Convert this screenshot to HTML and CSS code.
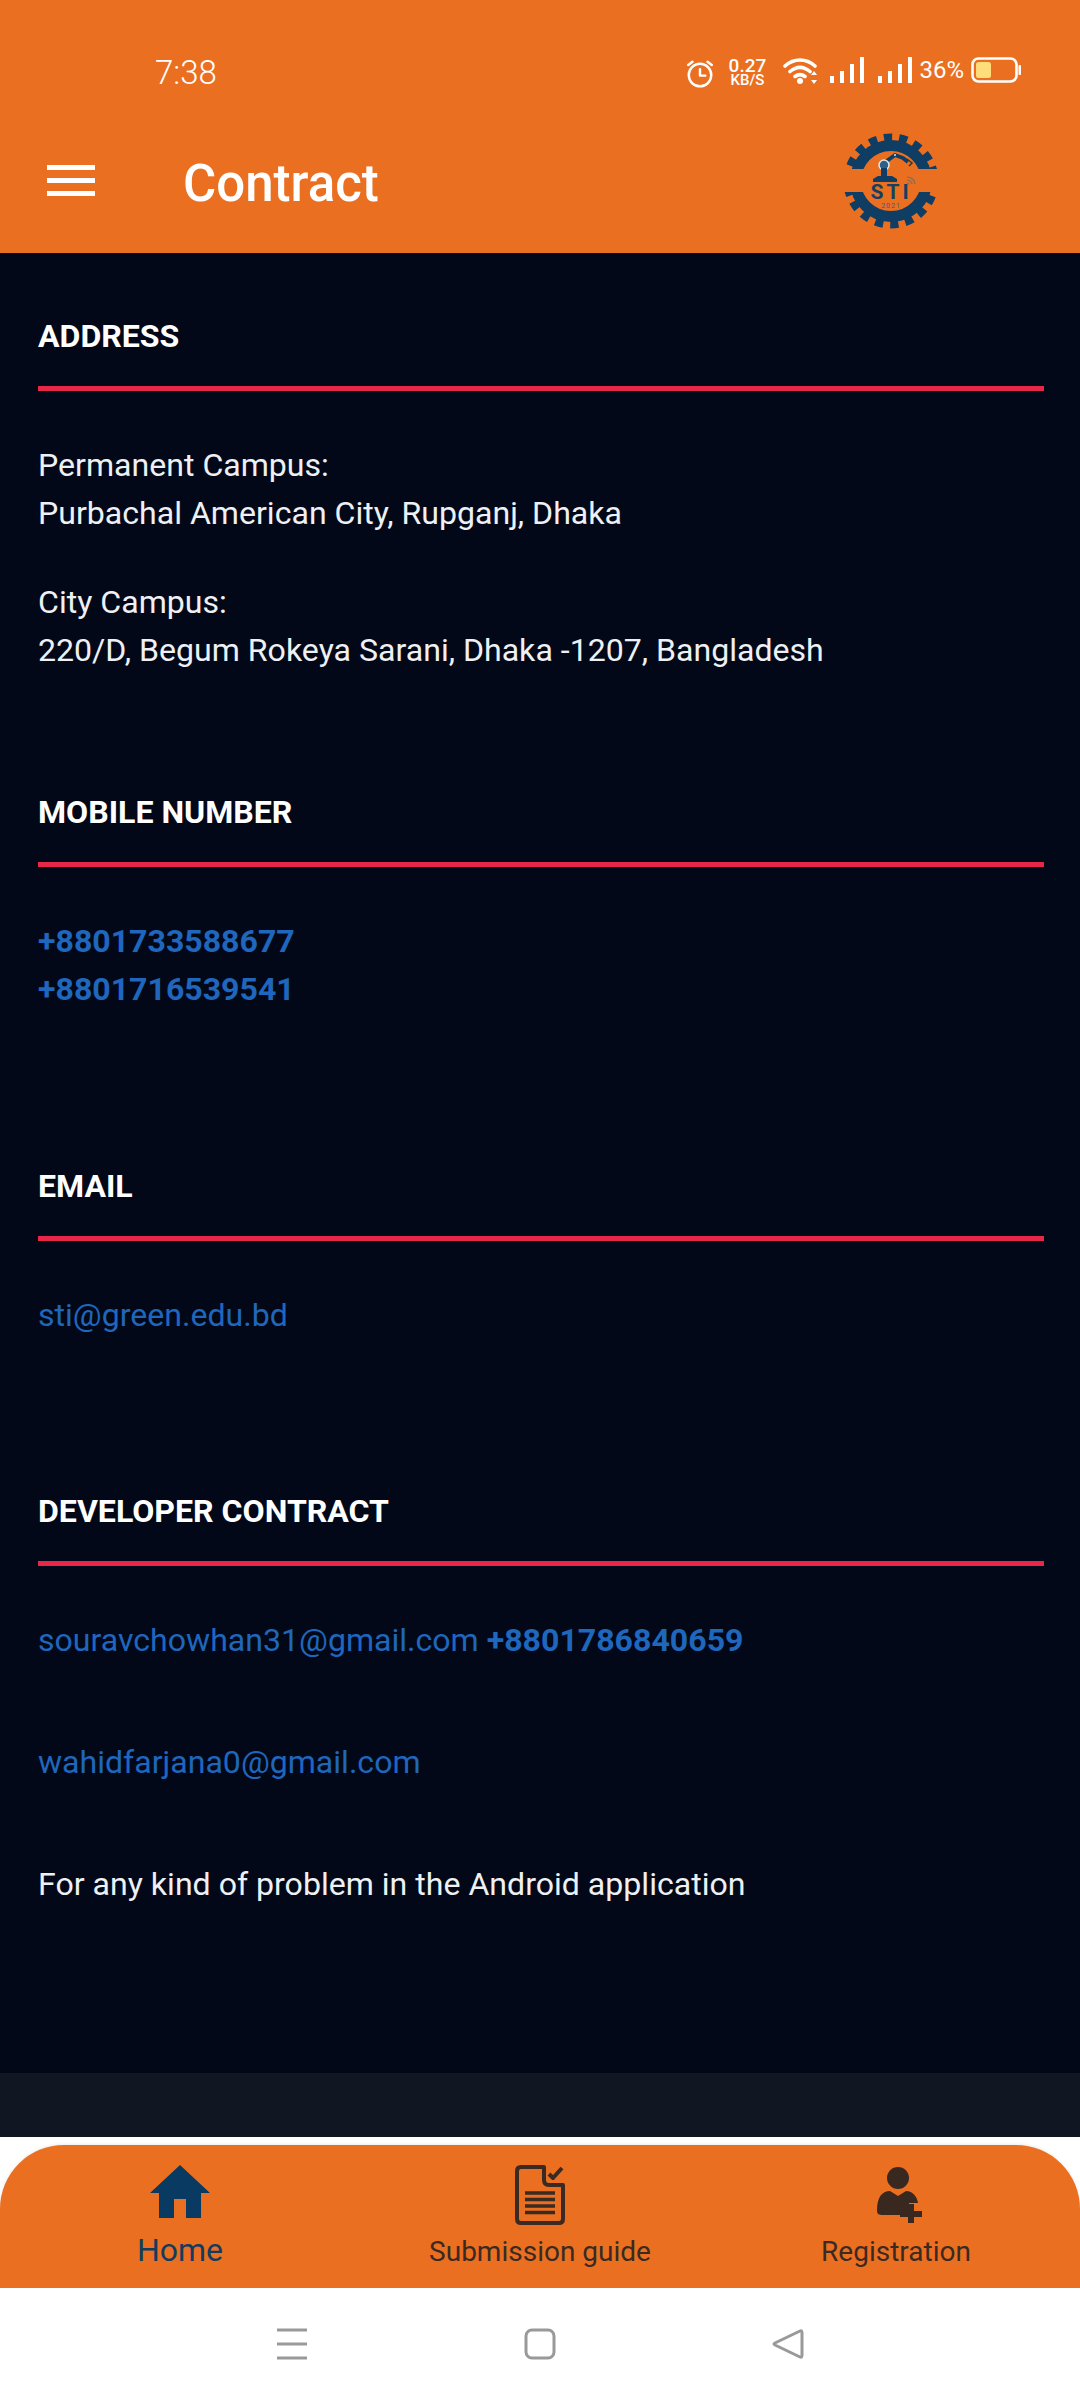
FILE: index.html
```html
<!DOCTYPE html>
<html lang="en">
<head>
<meta charset="utf-8">
<title>Contract</title>
<link rel="stylesheet" href="styles.css">
</head>
<body>
<div class="screen">
  <header class="top">
    <div class="status">
      <span class="time">7:38</span>
      <div class="status-icons">
        <svg class="ic-alarm" viewBox="0 0 28 28"><circle cx="14" cy="15" r="10.500"/><path d="M14 9.500V15.500H19M3 5.500L7 2.500M25 5.500L21 2.500"/></svg>
        <div class="speed"><span class="speed-num">0.27</span><span class="speed-unit">KB/S</span></div>
        <svg class="ic-wifi" viewBox="0 0 36 28"><path class="arc" d="M2 9C11 1 23 1 32 9M7 14.500C13.500 9 20.500 9 27 14.500M12 19.500C15.500 16.800 18.500 16.800 22 19.500"/><circle class="fill" cx="17" cy="24" r="3"/><path class="fill" d="M31 14L34 18H28ZM31 27L28 23H34Z"/></svg>
        <svg class="ic-signal" viewBox="0 0 34 26"><rect x="0" y="19" width="4" height="7"/><rect x="10" y="14" width="4" height="12"/><rect x="20" y="7" width="4" height="19"/><rect x="30" y="0" width="4" height="26"/></svg>
        <svg class="ic-signal ic-signal-b" viewBox="0 0 34 26"><rect x="0" y="19" width="4" height="7"/><rect x="10" y="14" width="4" height="12"/><rect x="20" y="7" width="4" height="19"/><rect x="30" y="0" width="4" height="26"/></svg>
        <span class="pct">36%</span>
        <svg class="ic-batt" viewBox="0 0 50 26"><rect class="batt-body" x="1.500" y="1.500" width="44" height="23" rx="6"/><rect class="batt-level" x="5" y="5" width="15" height="16" rx="2.500"/><rect class="batt-tip" x="47.500" y="8" width="2.500" height="10" rx="1"/></svg>
      </div>
    </div>
    <div class="appbar">
      <div class="burger"><i></i><i></i><i></i></div>
      <h1 class="title">Contract</h1>
      <svg class="logo" viewBox="0 0 94 98">
        <defs>
          <clipPath id="gearclip"><rect x="0" y="0" width="94" height="36"/><rect x="0" y="59" width="94" height="39"/></clipPath>
        </defs>
        <g clip-path="url(#gearclip)">
          <circle class="gear-teeth" cx="47" cy="48" r="43.500"/>
          <circle class="gear-ring" cx="47" cy="48" r="35.500"/>
        </g>
        <path class="arm" d="M40 30L51 22L59 25L64 29"/>
        <circle class="joint" cx="40" cy="32" r="5"/>
        <circle class="dot" cx="51" cy="22" r="1"/>
        <path class="base" d="M29 49V46L34 43H48L53 46V49ZM37 43L37 35H43L43 43Z"/>
        <path class="claw" d="M63 26L68 30L65 33"/>
        <text class="logo-sti" x="47" y="66" text-anchor="middle">STI</text>
        <text class="logo-year" x="47" y="75" text-anchor="middle">2021</text>
        <path class="wave" d="M63 44C67 44 71 47 71 51M63 47C65.500 47 68 49 68 51M63 50C64 50 65 50.500 65 51.500"/>
      </svg>
    </div>
  </header>

  <main class="content">
    <section class="block block-address">
      <h2 class="heading">ADDRESS</h2>
      <p class="text">Permanent Campus:<br>Purbachal American City, Rupganj, Dhaka</p>
      <p class="text text-next">City Campus:<br>220/D, Begum Rokeya Sarani, Dhaka -1207, Bangladesh</p>
    </section>
    <section class="block block-mobile">
      <h2 class="heading">MOBILE NUMBER</h2>
      <p class="text link strong">+8801733588677<br>+8801716539541</p>
    </section>
    <section class="block block-email">
      <h2 class="heading">EMAIL</h2>
      <p class="text link">sti@green.edu.bd</p>
    </section>
    <section class="block block-dev">
      <h2 class="heading">DEVELOPER CONTRACT</h2>
      <p class="text link">souravchowhan31@gmail.com <b class="strong">+8801786840659</b></p>
      <p class="text link text-gap">wahidfarjana0@gmail.com</p>
      <p class="text text-gap">For any kind of problem in the Android application</p>
    </section>
  </main>
  <div class="strip"></div>

  <nav class="tabs">
    <div class="tab tab-active">
      <svg class="tab-icon ic-home" viewBox="0 0 60 54"><path d="M30 0L60 28H51V53H36V34H24V53H9V28H0Z"/></svg>
      <span class="tab-label">Home</span>
    </div>
    <div class="tab">
      <svg class="tab-icon ic-doc" viewBox="0 0 50 60"><path class="doc-line" d="M29 2H6Q2 2 2 6V54Q2 58 6 58H44Q48 58 48 54V20H34Q29 20 29 15Z"/><path class="doc-line thin" d="M10 28H40M10 34.500H40M10 41H40M10 47.500H40"/><path class="doc-line check" d="M34 9L38 13L47 3"/></svg>
      <span class="tab-label">Submission guide</span>
    </div>
    <div class="tab">
      <svg class="tab-icon ic-user" viewBox="0 0 46 56"><circle cx="22" cy="11" r="11"/><path d="M1 44C1 30 6 24 14 24L22 29L30 24C37 24 41 30 42 36H33V45H26V48H7C3 48 1 47 1 44Z"/><path d="M32 37H38V44H46V50H38V56H32V50H24V44H32Z"/></svg>
      <span class="tab-label">Registration</span>
    </div>
  </nav>

  <div class="sysnav">
    <svg class="sys-menu" viewBox="0 0 32 32"><path d="M1 2H31M1 16H31M1 30H31"/></svg>
    <svg class="sys-home" viewBox="0 0 32 32"><rect x="2" y="2" width="28" height="28" rx="6"/></svg>
    <svg class="sys-back" viewBox="0 0 32 32"><path d="M28 3Q30 2 30 5V27Q30 30 28 29L3 17Q1 16 3 15Z"/></svg>
  </div>
</div>
</body>
</html>
```
FILE: styles.css
```css
* { box-sizing: border-box; }
html, body { margin: 0; padding: 0; }
body { width: 1080px; height: 2400px; background: #fff; font-family: Roboto, "Liberation Sans", sans-serif; overflow: hidden; }
.screen { width: 1080px; height: 2400px; display: flex; flex-direction: column; }

.top { height: 253px; background: #eb6f20; color: #fff; flex: none; }
.status { height: 104px; padding: 42px 0 0 155px; display: flex; align-items: flex-start; justify-content: space-between; }
.time { font-size: 33px; line-height: 33px; font-weight: 300; color: #fff; margin-top: 14px; }
.status-icons { display: flex; align-items: flex-start; padding-right: 59px; margin-top: 15px; }
.ic-alarm { width: 30px; height: 30px; margin-right: 11px; margin-top: 2px; fill: none; stroke: #fff; stroke-width: 2.300; stroke-linecap: round; stroke-linejoin: round; }
.speed { display: flex; flex-direction: column; align-items: center; width: 42px; margin-right: 15px; font-weight: 500; color: #fff; }
.speed-num { font-size: 19px; line-height: 17px; }
.speed-unit { font-size: 15px; line-height: 13px; }
.ic-wifi { width: 36px; height: 28px; margin-right: 11px; }
.ic-wifi .arc { fill: none; stroke: #fff; stroke-width: 3.600; stroke-linecap: round; }
.ic-wifi .fill { fill: #fff; }
.ic-signal { width: 34px; height: 26px; fill: #fff; margin-right: 14px; }
.ic-signal-b { margin-right: 7px; }
.pct { font-size: 24px; line-height: 26px; color: #fff; margin-right: 7px; }
.ic-batt { width: 50px; height: 26px; }
.batt-body { fill: none; stroke: #fff; stroke-width: 2.600; }
.batt-level { fill: #ffdd7a; }
.batt-tip { fill: #fff; }

.appbar { height: 149px; display: flex; align-items: flex-start; }
.burger { width: 48px; margin: 61px 0 0 47px; display: flex; flex-direction: column; gap: 8px; }
.burger i { display: block; height: 5px; background: #fff; }
.title { margin: 50px 0 0 88px; font-size: 51px; line-height: 60px; font-weight: 500; color: #fff; flex: 1; }
.logo { width: 94px; height: 98px; margin: 29px 142px 0 0; }
.gear-teeth { fill: none; stroke: #0f3d63; stroke-width: 8; stroke-dasharray: 8.200 7; }
.gear-ring { fill: none; stroke: #0f3d63; stroke-width: 11; }
.arm { fill: none; stroke: #0f3d63; stroke-width: 4; stroke-linejoin: round; }
.joint { fill: #2f5f86; stroke: #dfe8ee; stroke-width: 1.500; }
.dot { fill: #dfe8ee; }
.base { fill: #0f3d63; }
.claw { fill: none; stroke: #2b3a40; stroke-width: 1.500; }
.logo-sti { font-size: 21px; font-weight: 700; fill: #163f61; letter-spacing: 3px; font-family: Roboto, sans-serif; }
.logo-year { font-size: 7px; fill: #3c5f7c; font-family: Roboto, sans-serif; letter-spacing: 1px; }
.wave { fill: none; stroke: #6f6f6f; stroke-width: 1.200; }

.content { height: 1820px; background: #020818; padding: 0 36px 0 38px; flex: none; }
.heading { margin: 0; font-size: 32.100px; line-height: 40px; font-weight: 700; color: #fff; padding-bottom: 30px; border-bottom: 5px solid #e8264a; }
.text { margin: 0; font-size: 32.100px; line-height: 48px; color: #eef0f4; font-weight: 400; }
.block-address { padding-top: 63px; }
.block-address .heading + .text { margin-top: 50px; }
.text-next { margin-top: 41px; }
.block-mobile { padding-top: 118px; }
.block-email { padding-top: 153px; }
.block-dev { padding-top: 152px; }
.block .heading + .link { margin-top: 50px; }
.link { color: #1f66bd; }
.strong { font-weight: 700; color: #1f66bd; }
.text-gap { margin-top: 74px; }

.strip { height: 64px; background: #111722; flex: none; }
.tabs { height: 143px; margin-top: 8px; flex: none; background: #eb6f20; border-radius: 64px 64px 0 0; display: grid; grid-template-columns: 360px 360px 352px; box-shadow: 0 -1px 3px rgba(0,0,0,.08); }
.tab { display: flex; flex-direction: column; align-items: center; padding-top: 20px; color: #3b2a22; }
.tab-icon { flex: none; }
.ic-home { width: 60px; height: 54px; fill: #083a62; }
.ic-doc { width: 50px; height: 60px; }
.doc-line { fill: none; stroke: #3b2a22; stroke-width: 4; stroke-linejoin: round; }
.doc-line.thin { stroke-width: 3.500; }
.ic-user { width: 46px; height: 56px; margin: 2px 0 2px 6px; fill: #38281f; }
.tab-label { font-size: 28px; line-height: 34px; margin-top: 10px; white-space: nowrap; }
.tab-active { color: #143b5e; }
.tab-active .tab-label { font-size: 32px; line-height: 38px; margin-top: 12px; }

.sysnav { flex: 1; background: #fff; display: grid; grid-template-columns: 308px 248px 248px 1fr; }
.sysnav svg { width: 32px; height: 32px; margin-top: 40px; justify-self: end; fill: none; stroke: #999; stroke-width: 3; stroke-linejoin: round; }
```
